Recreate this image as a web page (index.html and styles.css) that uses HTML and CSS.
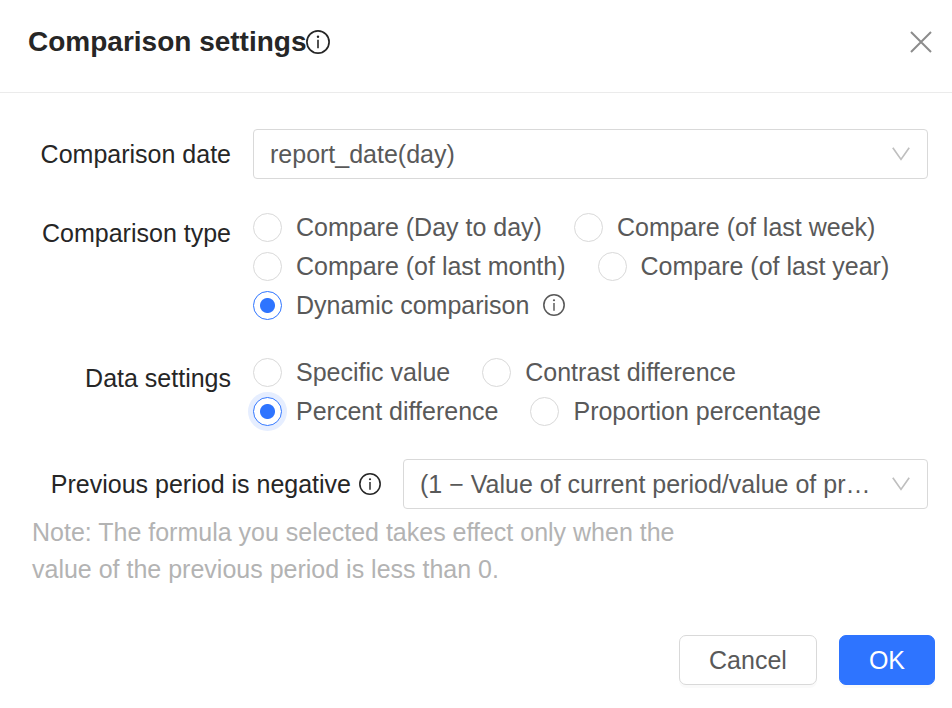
FILE: index.html
```html
<!DOCTYPE html>
<html lang="en">
<head>
  <meta charset="UTF-8">
  <meta name="viewport" content="width=device-width, initial-scale=1.0">
  <title>Comparison settings</title>
  <link rel="stylesheet" href="styles.css">
</head>
<body>
  <svg class="sprite" aria-hidden="true">
    <symbol id="icon-info" viewBox="0 0 24 24">
      <circle cx="12" cy="12" r="11.1" fill="none" stroke="currentColor" stroke-width="1.7"/>
      <circle cx="12" cy="6.8" r="1.2" fill="currentColor"/>
      <path d="M12 9.8v8.4" fill="none" stroke="currentColor" stroke-width="1.6"/>
    </symbol>
    <symbol id="icon-arrow" viewBox="0 0 18 14">
      <path d="M.8 .8L9 12.4 17.2 .8" fill="none" stroke="currentColor" stroke-width="1.7"/>
    </symbol>
  </svg>

  <form class="modal">
    <header class="modal-header">
      <h1 class="modal-title">Comparison settings<svg class="info info-title"><use href="#icon-info"/></svg></h1>
      <button type="button" class="close" aria-label="Close">
        <svg viewBox="0 0 22 22"><path d="M1 1l20 20M21 1L1 21" fill="none" stroke="currentColor" stroke-width="2"/></svg>
      </button>
    </header>

    <div class="modal-body">
      <div class="row">
        <label class="label" for="date">Comparison date</label>
        <div class="select">
          <select id="date">
            <option>report_date(day)</option>
          </select>
          <svg class="arrow"><use href="#icon-arrow"/></svg>
        </div>
      </div>

      <div class="row row-top" role="radiogroup" aria-labelledby="type-label">
        <span class="label" id="type-label">Comparison type</span>
        <div class="options">
          <label class="radio"><input type="radio" name="type">Compare (Day to day)</label>
          <label class="radio"><input type="radio" name="type">Compare (of last week)</label>
          <label class="radio"><input type="radio" name="type">Compare (of last month)</label>
          <label class="radio"><input type="radio" name="type">Compare (of last year)</label>
          <label class="radio"><input type="radio" name="type" checked>Dynamic comparison<svg class="info"><use href="#icon-info"/></svg></label>
        </div>
      </div>

      <div class="row row-top" role="radiogroup" aria-labelledby="data-label">
        <span class="label" id="data-label">Data settings</span>
        <div class="options">
          <label class="radio"><input type="radio" name="data">Specific value</label>
          <label class="radio"><input type="radio" name="data">Contrast difference</label>
          <label class="radio"><input type="radio" name="data" class="focused" checked>Percent difference</label>
          <label class="radio"><input type="radio" name="data">Proportion percentage</label>
        </div>
      </div>

      <div class="row">
        <label class="label label-wide" for="formula">Previous period is negative<svg class="info"><use href="#icon-info"/></svg></label>
        <div class="select">
          <select id="formula">
            <option>(1 − Value of current period/value of previous period) * 100%</option>
          </select>
          <svg class="arrow"><use href="#icon-arrow"/></svg>
        </div>
      </div>
    </div>

    <p class="note">Note: The formula you selected takes effect only when the value of the previous period is less than 0.</p>

    <footer class="modal-footer">
      <button type="button" class="btn">Cancel</button>
      <button type="submit" class="btn btn-primary">OK</button>
    </footer>
  </form>
</body>
</html>
```
FILE: styles.css
```css
:root {
  --primary-color: #2e74ff;
  --title-color: #262626;
  --text-color: #595959;
  --muted-color: #b3b3b3;
  --border-color: #d9d9d9;
}

* {
  box-sizing: border-box;
}

body {
  margin: 0;
  background: #fff;
  color: var(--text-color);
  font-family: "Liberation Sans", Arial, sans-serif;
  font-size: 25px;
  line-height: 38px;
}

button, select {
  font: inherit;
  color: inherit;
}

.sprite {
  display: none;
}

.modal-header {
  display: flex;
  align-items: center;
  justify-content: space-between;
  padding: 23px 20px 31px 28px;
  border-bottom: 1px solid #ebebeb;
}

.modal-title {
  display: flex;
  align-items: center;
  margin: 0;
  color: var(--title-color);
  font-size: 28px;
  font-weight: bold;
  line-height: 38px;
}

.close {
  display: flex;
  padding: 0;
  border: none;
  background: none;
  color: #8c8c8c;
  cursor: pointer;
}

.close svg {
  width: 22px;
  height: 22px;
}

.info {
  flex: none;
  width: 22px;
  height: 22px;
}

.info-title {
  width: 24px;
  height: 24px;
}

.modal-body {
  display: flex;
  flex-direction: column;
  gap: 29px;
  padding: 36px 24px 0;
}

.row {
  display: flex;
  align-items: center;
  gap: 22px;
}

.row-top {
  align-items: flex-start;
}

.label {
  flex: none;
  width: 207px;
  color: var(--title-color);
  text-align: right;
}

.row-top .label {
  padding-top: 6px;
}

.label-wide {
  display: flex;
  align-items: center;
  justify-content: flex-end;
  gap: 8px;
  width: 357px;
}

.select {
  position: relative;
  flex: 1;
  min-width: 0;
}

.select select {
  appearance: none;
  display: block;
  width: 100%;
  height: 50px;
  padding: 0 52px 0 16px;
  border: 1px solid var(--border-color);
  border-radius: 4px;
  background: #fff;
  text-overflow: ellipsis;
}

.arrow {
  position: absolute;
  top: 18px;
  right: 18px;
  width: 18px;
  height: 14px;
  color: #bfbfbf;
  pointer-events: none;
}

.options {
  display: flex;
  flex: 1;
  flex-wrap: wrap;
  gap: 1px 32px;
}

.radio {
  display: flex;
  align-items: center;
}

.radio .info {
  margin-left: 14px;
}

.radio input {
  appearance: none;
  flex: none;
  width: 29px;
  height: 29px;
  margin: 0 14px 0 0;
  border: 1px solid var(--border-color);
  border-radius: 50%;
  background: #fff;
}

.radio input:checked {
  border-color: var(--primary-color);
  background: radial-gradient(circle, var(--primary-color) 7px, #fff 8px);
}

.radio input.focused {
  box-shadow: 0 0 0 5px #e6eeff;
}

.note {
  max-width: 700px;
  margin: 5px 0 0;
  padding: 0 0 0 32px;
  color: var(--muted-color);
  line-height: 37px;
}

.modal-footer {
  display: flex;
  justify-content: flex-end;
  gap: 22px;
  padding: 47px 17px 23px;
}

.btn {
  height: 50px;
  padding: 0 29px;
  border: 1px solid var(--border-color);
  border-radius: 7px;
  background: #fff;
  box-shadow: 0 3px 0 rgba(0, 0, 0, 0.02);
  cursor: pointer;
}

.btn-primary {
  border-color: var(--primary-color);
  background: var(--primary-color);
  color: #fff;
}
```
